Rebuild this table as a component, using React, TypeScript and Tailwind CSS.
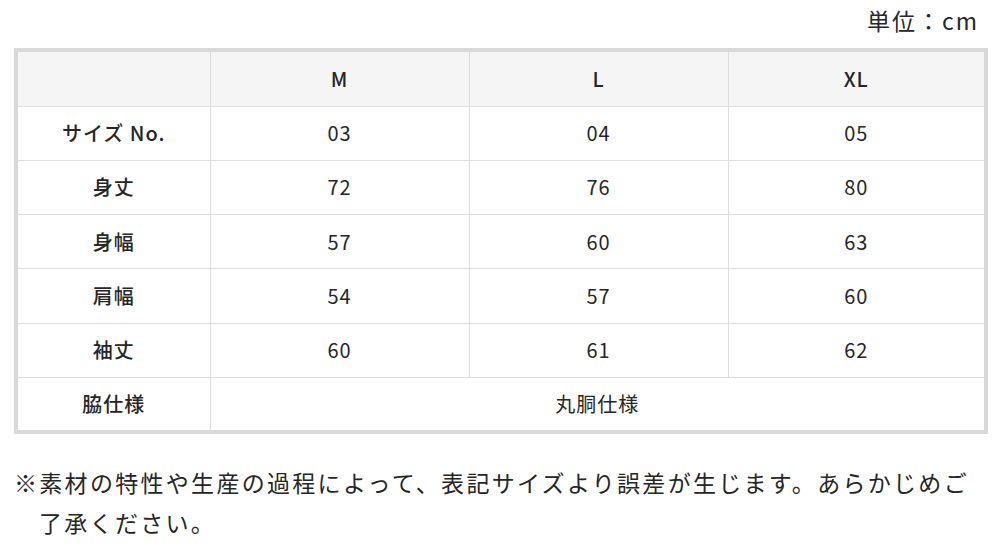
const sizes = ["M", "L", "XL"];

const rows: { label: string; values: string[] }[] = [
  { label: "サイズ No.", values: ["03", "04", "05"] },
  { label: "身丈", values: ["72", "76", "80"] },
  { label: "身幅", values: ["57", "60", "63"] },
  { label: "肩幅", values: ["54", "57", "60"] },
  { label: "袖丈", values: ["60", "61", "62"] },
];

export default function App() {
  return (
    <main className="min-h-screen bg-white px-[14px] font-['Noto_Sans_CJK_JP',sans-serif] text-[#262626]">
      <p className="h-[40px] w-[974px] pr-[9px] text-right text-[23px] leading-[40px] tracking-[2px]">
        単位：cm
      </p>

      <table className="mt-[8px] w-[974px] table-fixed border-collapse border-4 border-[#d9d9d9] text-center text-[20px] tracking-[1px]">
        <colgroup>
          <col className="w-[194px]" />
          <col className="w-[259px]" />
          <col className="w-[259px]" />
          <col />
        </colgroup>
        <thead>
          <tr className="bg-[#f5f5f5]">
            <th className="h-[56px] border border-[#dddddd]" />
            {sizes.map((s) => (
              <th key={s} className="h-[56px] border border-[#dddddd] font-medium">
                {s}
              </th>
            ))}
          </tr>
        </thead>
        <tbody>
          {rows.map((row) => (
            <tr key={row.label}>
              <td className="h-[54.3px] border border-[#dddddd] font-medium">{row.label}</td>
              {row.values.map((v, i) => (
                <td key={i} className="h-[54.3px] border border-[#dddddd]">
                  {v}
                </td>
              ))}
            </tr>
          ))}
          <tr>
            <td className="h-[54.3px] border border-[#dddddd] font-medium">脇仕様</td>
            <td colSpan={3} className="h-[54.3px] border border-[#dddddd]">
              丸胴仕様
            </td>
          </tr>
        </tbody>
      </table>

      <p className="mt-[28px] w-[965px] pl-[25px] -indent-[25px] text-[23px] leading-[40px] tracking-[2.3px]">
        ※素材の特性や生産の過程によって、表記サイズより誤差が生じます。あらかじめご了承ください。
      </p>
    </main>
  );
}
